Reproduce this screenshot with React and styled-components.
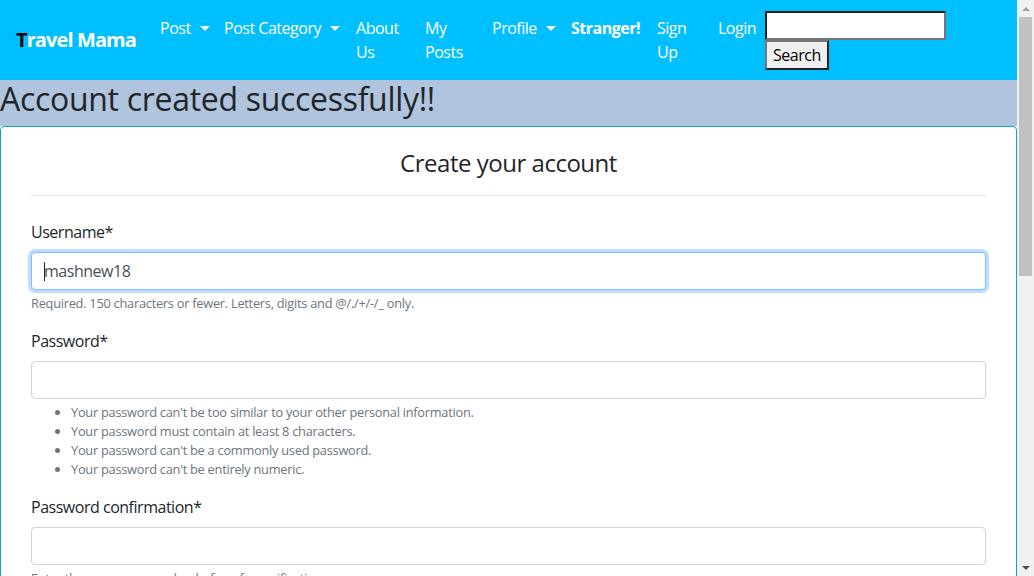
import styled, { createGlobalStyle } from 'styled-components';

const GlobalStyle = createGlobalStyle`
	* {
		box-sizing: border-box;
	}
	html {
		overflow: hidden;
	}
	body {
		margin: 0;
		font-family: 'Open Sans', 'Noto Sans', 'Liberation Sans', sans-serif;
		font-size: 16px;
		line-height: 1.5;
		letter-spacing: -0.03em;
		color: #212529;
		background: #fff;
	}
`;

const navItems = [
	{ label: 'Post', width: 64, caret: true },
	{ label: 'Post Category', width: 132, caret: true },
	{ label: 'About Us', width: 69 },
	{ label: 'My Posts', width: 67 },
	{ label: 'Profile', width: 79, caret: true },
	{ label: 'Stranger!', width: 86, bold: true },
	{ label: 'Sign Up', width: 61 },
	{ label: 'Login', width: 55 },
];

const passwordRules = [
	"Your password can't be too similar to your other personal information.",
	'Your password must contain at least 8 characters.',
	"Your password can't be a commonly used password.",
	"Your password can't be entirely numeric.",
];

const App = () => {
	return (
		<Page>
			<GlobalStyle />
			<Main>
				<Navbar>
					<Brand>
						<span className="first">T</span>ravel Mama
					</Brand>
					<NavList>
						{navItems.map((item) => (
							<NavItem key={item.label} $width={item.width} $bold={item.bold} $nowrap={item.caret}>
								{item.label}
								{item.caret && <Caret />}
							</NavItem>
						))}
					</NavList>
					<SearchForm>
						<SearchInput type="text" />
						<SearchButton type="button">Search</SearchButton>
					</SearchForm>
				</Navbar>

				<Message>
					<h2>Account created successfully!!</h2>
				</Message>

				<Card>
					<CardTitle>Create your account</CardTitle>
					<Divider />

					<FormGroup>
						<Label>Username*</Label>
						<InputWrap>
							<Input type="text" defaultValue="mashnew18" $focused />
							<TextCaret />
						</InputWrap>
						<HelpText>Required. 150 characters or fewer. Letters, digits and @/./+/-/_ only.</HelpText>
					</FormGroup>

					<FormGroup>
						<Label>Password*</Label>
						<Input type="password" />
						<HelpText as="div">
							<RuleList>
								{passwordRules.map((rule) => (
									<li key={rule}>{rule}</li>
								))}
							</RuleList>
						</HelpText>
					</FormGroup>

					<FormGroup>
						<Label>Password confirmation*</Label>
						<Input type="password" />
						<HelpText>Enter the same password as before, for verification.</HelpText>
					</FormGroup>

					<SubmitButton type="button">Sign Up</SubmitButton>
				</Card>
			</Main>

			<ScrollTrack>
				<ScrollArrow $down={false} />
				<ScrollThumb />
				<ScrollSpacer />
				<ScrollArrow $down />
			</ScrollTrack>
		</Page>
	);
};

const Page = styled.div`
	display: flex;
	align-items: flex-start;
`;

const Main = styled.div`
	flex: 1;
	min-width: 0;
`;

const Navbar = styled.nav`
	display: flex;
	align-items: center;
	height: 80px;
	padding: 8px 16px;
	background-color: #00bfff;
`;

const Brand = styled.a`
	font-size: 20px;
	font-weight: 700;
	line-height: 30px;
	letter-spacing: -0.9px;
	color: #fff;
	margin-right: 16px;
	white-space: nowrap;
	.first {
		color: #000;
	}
`;

const NavList = styled.ul`
	display: flex;
	align-self: stretch;
	list-style: none;
	margin: 0;
	padding: 0;
`;

const NavItem = styled.li`
	flex-shrink: 0;
	width: ${(p) => p.$width}px;
	padding: 8px;
	color: #fff;
	font-weight: ${(p) => (p.$bold ? 700 : 400)};
	line-height: 24px;
	white-space: ${(p) => (p.$nowrap || p.$bold ? 'nowrap' : 'normal')};
`;

const Caret = styled.span`
	display: inline-block;
	margin-left: 9px;
	vertical-align: 3px;
	border-top: 5px solid #fff;
	border-left: 5px solid transparent;
	border-right: 5px solid transparent;
`;

const SearchForm = styled.form`
	display: flex;
	flex-direction: column;
	align-items: flex-start;
`;

const SearchInput = styled.input`
	width: 181px;
	height: 29px;
	border: 2px solid;
	border-color: #1f1f1f #767676 #767676 #1f1f1f;
	background: #fff;
	font-size: 16px;
`;

const SearchButton = styled.button`
	height: 30px;
	padding: 0 6px;
	font-family: inherit;
	font-size: 16px;
	letter-spacing: -0.03em;
	color: #000;
	background: #efefef;
	border: 2px solid;
	border-color: #767676 #1f1f1f #1f1f1f #767676;
`;

const Message = styled.div`
	padding-bottom: 8px;
	background-color: #b0c4de;
	h2 {
		margin: 0;
		font-size: 32px;
		font-weight: 500;
		line-height: 1.2;
		letter-spacing: -0.3px;
	}
`;

const Card = styled.div`
	border: 1px solid #17a2b8;
	border-radius: 4px;
	padding: 22px 30px 30px;
`;

const CardTitle = styled.h4`
	margin: 0;
	text-align: center;
	font-size: 24px;
	font-weight: 400;
	line-height: 1.2;
`;

const Divider = styled.hr`
	margin: 17px 0 24px;
	border: 0;
	border-top: 1px solid rgba(0, 0, 0, 0.1);
`;

const FormGroup = styled.div`
	margin-bottom: 16px;
`;

const Label = styled.label`
	display: inline-block;
	margin-bottom: 8px;
`;

const InputWrap = styled.div`
	position: relative;
`;

const TextCaret = styled.span`
	position: absolute;
	left: 13px;
	top: 10px;
	width: 1px;
	height: 19px;
	background: #212529;
`;

const Input = styled.input`
	display: block;
	width: 100%;
	height: 38px;
	padding: 6px 12px;
	font-family: inherit;
	font-size: 16px;
	letter-spacing: -0.03em;
	color: #495057;
	background: #fff;
	border: 1px solid ${(p) => (p.$focused ? '#80bdff' : '#ced4da')};
	border-radius: 4px;
	box-shadow: ${(p) => (p.$focused ? '0 0 0 3px rgba(0, 123, 255, 0.25)' : 'none')};
	outline: none;
`;

const HelpText = styled.small`
	display: block;
	margin-top: 4px;
	font-size: 12.8px;
	line-height: 19px;
	letter-spacing: -0.02em;
	color: #6c757d;
`;

const RuleList = styled.ul`
	margin: 0;
	padding-left: 40px;
`;

const SubmitButton = styled.button`
	padding: 6px 12px;
	font-family: inherit;
	font-size: 16px;
	color: #fff;
	background: #17a2b8;
	border: 1px solid #17a2b8;
	border-radius: 4px;
`;

const ScrollTrack = styled.div`
	display: flex;
	flex-direction: column;
	align-items: center;
	flex-shrink: 0;
	width: 17px;
	height: 100vh;
	background: #f1f1f1;
`;

const ScrollArrow = styled.div`
	flex-shrink: 0;
	width: 17px;
	height: 17px;
	display: flex;
	align-items: center;
	justify-content: center;
	&::before {
		content: '';
		border-left: 4px solid transparent;
		border-right: 4px solid transparent;
		${(p) => (p.$down ? 'border-top: 4px solid #505050;' : 'border-bottom: 4px solid #a3a3a3;')}
	}
`;

const ScrollThumb = styled.div`
	width: 13px;
	height: 259px;
	background: #c1c1c1;
`;

const ScrollSpacer = styled.div`
	flex: 1;
`;

export default App;
